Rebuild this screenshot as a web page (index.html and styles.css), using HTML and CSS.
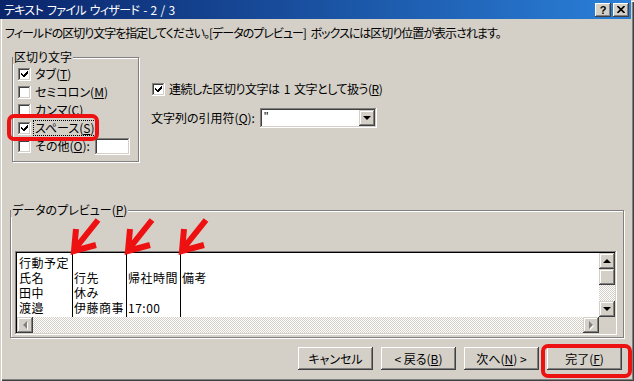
FILE: index.html
```html
<!DOCTYPE html>
<html lang="ja">
<head>
  <meta charset="UTF-8" />
  <title>テキスト ファイル ウィザード - 2 / 3</title>
  <link rel="stylesheet" href="styles.css">
</head>
<body>
  <div class="window">
    <div class="titlebar">
      <span class="title">テキスト ファイル ウィザード - 2 / 3</span>
      <div class="title-buttons">
        <span class="tbtn help">?</span>
        <span class="tbtn">
          <svg width="8" height="7" viewBox="0 0 8 7"><path d="M0.5 0 L7.5 7 M7.5 0 L0.5 7" stroke="#000" stroke-width="1.6"/></svg>
        </span>
      </div>
    </div>

    <div class="content">
      <p class="intro">フィールドの区切り文字を指定してください。[データのプレビュー] ボックスには区切り位置が表示されます。</p>

      <div class="options">
        <fieldset class="group delim">
          <legend>区切り文字</legend>
          <div class="group-body">
            <div class="check"><span class="box checked"></span><span>タブ(<u>T</u>)</span></div>
            <div class="check"><span class="box"></span><span>セミコロン(<u>M</u>)</span></div>
            <div class="check"><span class="box"></span><span>カンマ(<u>C</u>)</span></div>
            <div class="check"><span class="box checked"></span><span class="focus">スペース(<u>S</u>)</span></div>
            <div class="check"><span class="box"></span><span>その他(<u>O</u>):</span><span class="textbox"></span></div>
          </div>
        </fieldset>

        <div class="side">
          <div class="check"><span class="box checked"></span><span class="tight">連続した区切り文字は 1 文字として扱う(<u>R</u>)</span></div>
          <div class="quote-row">
            <span class="quote-label">文字列の引用符(<u>Q</u>):</span>
            <div class="combo">
              <span class="combo-value">"</span>
              <span class="combo-btn"><span class="tri-down"></span></span>
            </div>
          </div>
        </div>
      </div>

      <fieldset class="group preview">
        <legend>データのプレビュー(<u>P</u>)</legend>
        <div class="group-body">
          <div class="preview-box">
            <div class="preview-data">
              <div class="col"><div>行動予定</div><div>氏名</div><div>田中</div><div>渡邉</div></div>
              <div class="col"><div>&nbsp;</div><div>行先</div><div>休み</div><div>伊藤商事</div></div>
              <div class="col"><div>&nbsp;</div><div>帰社時間</div><div>&nbsp;</div><div>17:00</div></div>
              <div class="col last"><div>&nbsp;</div><div>備考</div><div>&nbsp;</div><div>&nbsp;</div></div>
            </div>
            <div class="vscroll">
              <span class="sbtn"><span class="tri-up"></span></span>
              <span class="sbtn thumb"></span>
              <span class="track"></span>
              <span class="sbtn"><span class="tri-down"></span></span>
            </div>
            <div class="hscroll">
              <span class="sbtn"><span class="tri-left"></span></span>
              <span class="track"></span>
              <span class="sbtn"><span class="tri-right"></span></span>
            </div>
            <div class="corner"></div>
          </div>
        </div>
      </fieldset>

      <div class="buttons">
        <button class="btn">キャンセル</button>
        <button class="btn">&lt; 戻る(<u>B</u>)</button>
        <button class="btn">次へ(<u>N</u>) &gt;</button>
        <button class="btn">完了(<u>F</u>)</button>
      </div>
    </div>

    <!-- annotations drawn over the dialog -->
    <div class="mark mark-space"></div>
    <div class="mark mark-finish"></div>
    <svg class="arrows" width="634" height="381" viewBox="0 0 634 381">
      <g fill="none" stroke="#ee1111" stroke-width="6" stroke-linejoin="miter">
        <path d="M74 250 L98 220 M76 229 L74 251 L96 245"/>
        <path d="M128 250 L152 220 M130 229 L128 251 L150 245"/>
        <path d="M182 250 L206 220 M184 229 L182 251 L204 245"/>
      </g>
    </svg>
  </div>
</body>
</html>
```

FILE: styles.css
```css
/* 1. BASE */
* {
  box-sizing: border-box;
  margin: 0;
  padding: 0;
}
body {
  font-family: "Noto Sans CJK JP", "Noto Sans", sans-serif;
  font-size: 12px;
  line-height: 14px;
  font-feature-settings: "palt" 1;
  color: #000;
  background: #d4d0c8;
}
u {
  text-decoration: underline;
  text-underline-offset: 1px;
}

/* 2. WINDOW FRAME */
.window {
  position: relative;
  width: 634px;
  height: 381px;
  background: #d4d0c8;
  box-shadow: inset 1px 1px #d4d0c8, inset 2px 2px #fff,
              inset -1px -1px #404040, inset -2px -2px #808080;
  overflow: hidden;
}
.titlebar {
  height: 19px;
  margin-right: 3px;
  padding: 0 2px 0 4px;
  display: flex;
  align-items: center;
  justify-content: space-between;
  background: linear-gradient(to right, #0a246a, #2a7fd8);
}
.title {
  color: #fff;
  letter-spacing: -0.7px;
  word-spacing: 2px;
}
.title-buttons {
  display: flex;
  gap: 2px;
}
.tbtn {
  width: 16px;
  height: 14px;
  display: flex;
  align-items: center;
  justify-content: center;
  background: #d4d0c8;
  box-shadow: inset -1px -1px #404040, inset 1px 1px #fff,
              inset -2px -2px #808080, inset 2px 2px #d4d0c8;
}
.tbtn.help {
  font-family: "Liberation Sans", sans-serif;
  font-weight: bold;
  font-size: 11px;
}

/* 3. CONTENT */
.content {
  padding: 0 12px 0 5px;
}
.intro {
  margin-top: 7px;
  letter-spacing: -1px;
  word-spacing: 3px;
}
.options {
  display: flex;
  align-items: flex-start;
  margin-top: 10px;
}

/* group boxes (etched frame) */
.group {
  border: 1px solid #808080;
  box-shadow: inset 1px 1px #fff, 1px 1px #fff;
  min-inline-size: 0;
}
.group legend {
  margin-left: 0;
  padding: 0 1px;
  background: #d4d0c8;
  line-height: 14px;
}
.delim {
  width: 127px;
  margin-left: 7px;
}
.delim .group-body {
  padding: 1px 0 6px 5px;
}

/* checkboxes */
.check {
  height: 18px;
  display: flex;
  align-items: center;
  white-space: nowrap;
}
.box {
  width: 13px;
  height: 13px;
  margin-right: 4px;
  flex: none;
  background: #fff;
  box-shadow: inset -1px -1px #fff, inset 1px 1px #808080,
              inset -2px -2px #d4d0c8, inset 2px 2px #404040;
}
.box.checked {
  background: #fff url("data:image/svg+xml,%3Csvg xmlns='http://www.w3.org/2000/svg' width='13' height='13'%3E%3Cpath d='M3 5h1v1h1v1h1V6h1V5h1V4h1V3h1v3h-1v1h-1v1h-1v1h-1v1H6V9H5V8H4V7H3z' fill='%23000'/%3E%3C/svg%3E") no-repeat;
}
.focus {
  outline: 1px dotted #000;
  outline-offset: 0;
  padding: 0 1px;
  margin-left: -1px;
}
.tight {
  letter-spacing: -0.5px;
  word-spacing: 2px;
}
.textbox {
  width: 35px;
  height: 17px;
  margin-left: 5px;
  background: #fff;
  box-shadow: inset -1px -1px #fff, inset 1px 1px #808080,
              inset -2px -2px #d4d0c8, inset 2px 2px #404040;
}

/* right column */
.side {
  margin-left: 12px;
  padding-top: 30px;
}
.side > .check .box {
  margin-left: 1px;
}
.quote-row {
  display: flex;
  align-items: center;
  margin-top: 10px;
}
.quote-label {
  width: 109px;
}
.combo {
  width: 117px;
  height: 20px;
  padding: 2px;
  display: flex;
  background: #fff;
  box-shadow: inset -1px -1px #fff, inset 1px 1px #808080,
              inset -2px -2px #d4d0c8, inset 2px 2px #404040;
}
.combo-value {
  flex: 1;
  padding-left: 2px;
  font-family: "Liberation Sans", sans-serif;
  line-height: 14px;
}
.combo-btn {
  width: 16px;
  height: 16px;
  display: flex;
  align-items: center;
  justify-content: center;
  background: #d4d0c8;
  box-shadow: inset -1px -1px #404040, inset 1px 1px #d4d0c8,
              inset -2px -2px #808080, inset 2px 2px #fff;
}

/* 4. PREVIEW */
.preview {
  width: 614px;
  margin: 41px 0 0 5px;
}
.preview .group-body {
  padding: 34px 4px 2px 4px;
}
.preview-box {
  width: 602px;
  height: 84px;
  padding: 2px;
  display: grid;
  grid-template-columns: 582px 16px;
  grid-template-rows: 64px 16px;
  background: #d4d0c8;
  box-shadow: inset -1px -1px #fff, inset 1px 1px #808080,
              inset -2px -2px #d4d0c8, inset 2px 2px #000;
}
.preview-data {
  display: flex;
  background: #fff;
  overflow: hidden;
  font-feature-settings: normal;
  letter-spacing: 0.5px;
  line-height: 15px;
}
.col {
  width: 54px;
  padding: 2px 0 0 1px;
  border-right: 1px solid #000;
  white-space: nowrap;
}
.col:first-child {
  width: 56px;
  padding-left: 2px;
}
.col.last {
  flex: 1;
  border-right: none;
}

/* scrollbars */
.track {
  flex: 1;
  background-image: conic-gradient(#fff 25%, #d4d0c8 0 50%, #fff 0 75%, #d4d0c8 0);
  background-size: 2px 2px;
}
.vscroll, .hscroll {
  display: flex;
}
.vscroll {
  flex-direction: column;
}
.sbtn {
  width: 16px;
  height: 16px;
  flex: none;
  display: flex;
  align-items: center;
  justify-content: center;
  background: #d4d0c8;
  box-shadow: inset -1px -1px #404040, inset 1px 1px #d4d0c8,
              inset -2px -2px #808080, inset 2px 2px #fff;
}
.corner {
  background: #d4d0c8;
}
.tri-up, .tri-down, .tri-left, .tri-right {
  width: 0;
  height: 0;
}
.tri-up {
  border: 4px solid transparent;
  border-top: none;
  border-bottom-color: #000;
}
.tri-down {
  border: 4px solid transparent;
  border-bottom: none;
  border-top-color: #000;
}
.tri-left {
  border: 4px solid transparent;
  border-left: none;
  border-right-color: #808080;
  filter: drop-shadow(1px 1px 0 #fff);
}
.tri-right {
  border: 4px solid transparent;
  border-right: none;
  border-left-color: #808080;
  filter: drop-shadow(1px 1px 0 #fff);
}

/* 5. BUTTONS */
.buttons {
  display: flex;
  justify-content: flex-end;
  gap: 8px;
  margin-top: 9px;
}
.btn {
  width: 75px;
  height: 23px;
  border: none;
  font: inherit;
  font-feature-settings: "palt" 1;
  color: #000;
  background: #d4d0c8;
  box-shadow: inset -1px -1px #404040, inset 1px 1px #fff,
              inset -2px -2px #808080, inset 2px 2px #d4d0c8;
}

/* 6. ANNOTATIONS */
.mark {
  position: absolute;
  border: 4px solid #ee1111;
  border-radius: 7px;
}
.mark-space {
  left: 7px;
  top: 114px;
  width: 92px;
  height: 27px;
}
.mark-finish {
  left: 541px;
  top: 344px;
  width: 91px;
  height: 34px;
}
.arrows {
  position: absolute;
  left: 0;
  top: 0;
  pointer-events: none;
}
```
